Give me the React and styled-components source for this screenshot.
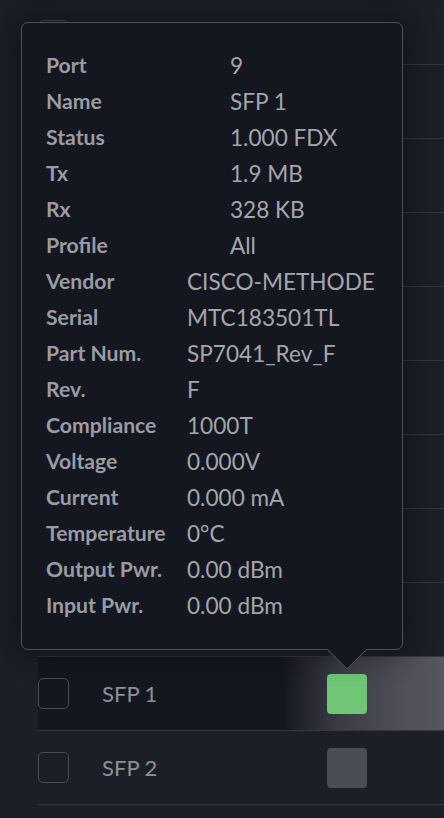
import React from "react";
import styled, { createGlobalStyle } from "styled-components";

const Global = createGlobalStyle`
  html, body { margin: 0; padding: 0; background: #1c1e28; }
  body { font-family: Lato, "Open Sans", sans-serif; overflow: hidden; }
  * { box-sizing: border-box; }
`;

const Page = styled.div`
  position: relative;
  width: 444px;
  height: 818px;
  overflow: hidden;
  background: #1c1e28;
  padding: 6px 0 0 38px;
`;

const Table = styled.div`
  width: 440px;
  display: flex;
  flex-direction: column;
`;

const HeaderRow = styled.div`
  height: 59px;
  display: flex;
  align-items: center;
  border-bottom: 1px solid #353741;
`;

const Row = styled.div`
  height: 74px;
  display: flex;
  align-items: center;
  border-bottom: 1px solid #353741;
  background: ${(p) =>
    p.$active
      ? "linear-gradient(90deg, #151720 0px, #151720 245px, #3a3b44 300px, #4d4e57 360px, #55565e 406px)"
      : "transparent"};
`;

const Check = styled.div`
  width: 31px;
  height: 31px;
  border: 1.5px solid #4a4c56;
  border-radius: 5px;
  flex: none;
`;

const Name = styled.div`
  margin-left: 33px;
  width: 225px;
  font-size: 22px;
  color: #8e9099;
  flex: none;
`;

const Status = styled.div`
  width: 40px;
  height: 40px;
  border-radius: 4px;
  background: ${(p) => (p.$up ? "#6fc775" : "#4a4c56")};
  flex: none;
`;

const Tooltip = styled.div`
  position: absolute;
  left: 21px;
  top: 22px;
  width: 382px;
  height: 628px;
  background: #151720;
  border: 1.5px solid #4d4f59;
  border-radius: 7px;
  box-shadow: 0 0 28px 6px rgba(8, 9, 14, 0.45);
  padding: 24px 0 0 24px;
`;

const Arrow = styled.div`
  position: absolute;
  left: 311px;
  bottom: -15px;
  width: 28px;
  height: 28px;
  background: #151720;
  border-right: 1.5px solid #4d4f59;
  border-bottom: 1.5px solid #4d4f59;
  transform: rotate(45deg);
`;

const Grid = styled.div`
  display: grid;
  grid-template-columns: ${(p) => p.$label}px auto;
  grid-auto-rows: 36px;
  align-items: center;
`;

const Label = styled.div`
  font-weight: 700;
  font-size: 21.2px;
  color: #9a9ca5;
  white-space: nowrap;
`;

const Value = styled.div`
  font-size: 22.6px;
  color: #a4a6ae;
  white-space: nowrap;
`;

const general = [
  ["Port", "9"],
  ["Name", "SFP 1"],
  ["Status", "1.000 FDX"],
  ["Tx", "1.9 MB"],
  ["Rx", "328 KB"],
  ["Profile", "All"],
];

const module = [
  ["Vendor", "CISCO-METHODE"],
  ["Serial", "MTC183501TL"],
  ["Part Num.", "SP7041_Rev_F"],
  ["Rev.", "F"],
  ["Compliance", "1000T"],
  ["Voltage", "0.000V"],
  ["Current", "0.000 mA"],
  ["Temperature", "0°C"],
  ["Output Pwr.", "0.00 dBm"],
  ["Input Pwr.", "0.00 dBm"],
];

const rows = [
  { id: 1 }, { id: 2 }, { id: 3 }, { id: 4 },
  { id: 5 }, { id: 6 }, { id: 7 }, { id: 8 },
  { id: 9, name: "SFP 1", up: true, active: true },
  { id: 10, name: "SFP 2" },
  { id: 11 },
];

export default function App() {
  return (
    <>
      <Global />
      <Page>
        <Table>
          <HeaderRow>
            <Check />
          </HeaderRow>
          {rows.map((r) => (
            <Row key={r.id} $active={r.active}>
              <Check />
              <Name>{r.name}</Name>
              <Status $up={r.up} />
            </Row>
          ))}
        </Table>
        <Tooltip>
          <Grid $label={184}>
            {general.map(([l, v]) => (
              <React.Fragment key={l}>
                <Label>{l}</Label>
                <Value>{v}</Value>
              </React.Fragment>
            ))}
          </Grid>
          <Grid $label={141}>
            {module.map(([l, v]) => (
              <React.Fragment key={l}>
                <Label>{l}</Label>
                <Value>{v}</Value>
              </React.Fragment>
            ))}
          </Grid>
          <Arrow />
        </Tooltip>
      </Page>
    </>
  );
}
